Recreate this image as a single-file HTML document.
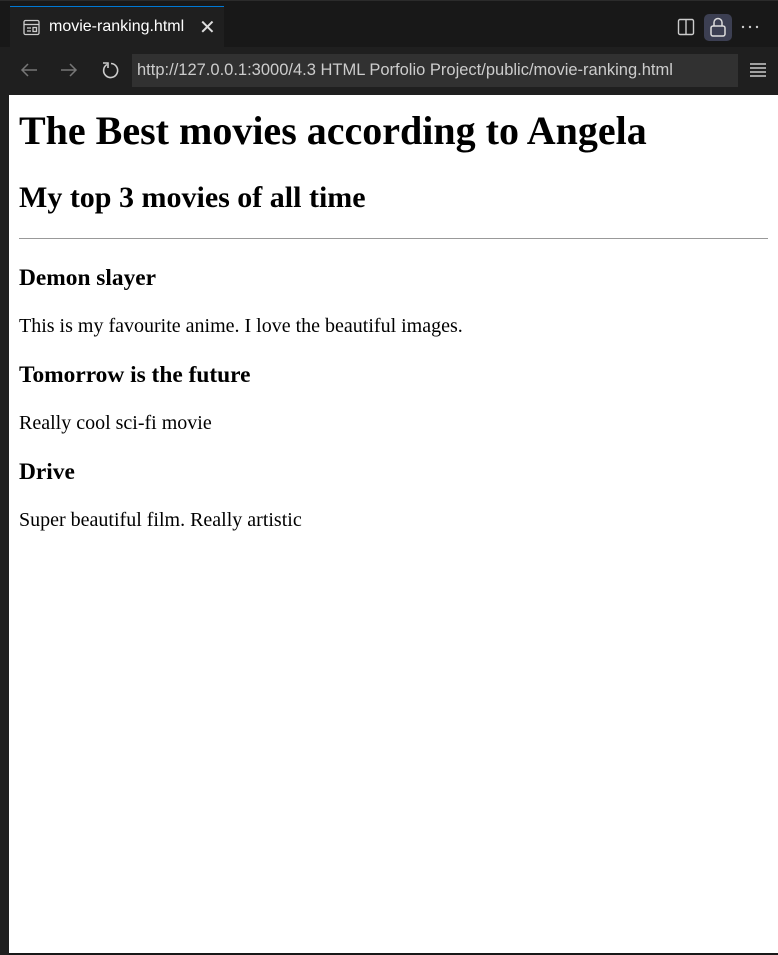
<!DOCTYPE html>
<html><head><style>
html,body{margin:0;padding:0;width:778px;height:955px;overflow:hidden;background:#181818;font-family:"Liberation Sans",sans-serif}
.top{position:absolute;left:0;top:0;width:778px;height:47px;background:#181818;border-top:1px solid #2b2b2b;box-sizing:border-box}
.tab{position:absolute;left:10px;top:5px;width:214px;height:42px;background:#1f1f1f;border-top:1px solid #0078d4;box-sizing:border-box;color:#fff;font-size:16px}
.tab .t{position:absolute;left:39px;top:11px}
.tab .x{position:absolute;left:189px;top:8px;font-size:20px;color:#ddd}
.bar{position:absolute;left:9px;top:47px;width:769px;height:48px;background:#1f1f1f}
.url{position:absolute;left:123px;top:7px;width:606px;height:33px;background:#313131;color:#ccc;font-size:16.5px;line-height:33px;padding-left:5px;box-sizing:border-box;white-space:nowrap}
.left{position:absolute;left:0;top:47px;width:9px;height:908px;background:#1f1f1f}
.page{position:absolute;left:9px;top:95px;width:769px;height:858px;background:#fff;overflow:hidden}
.c{zoom:1.25;font-family:"Liberation Serif",serif;margin:8px;color:#000}
.c h1{font-size:32px;margin:9.6px 0 21.44px}
.c h2{font-size:24px;margin:19.9px 0 18.3px}
.c h3{font-size:18.72px;margin:18.72px 0}
.c h3.f{margin-top:21.1px}
.c p{font-size:16px;margin:16px 0}
.c hr{border:0;border-top:1px solid #999;margin:3.4px 0 0}
</style></head><body>
<div class="top">
<div class="tab">
<svg style="position:absolute;left:13px;top:12px" width="17" height="17" viewBox="0 0 17 17" fill="none" stroke="#ccc" stroke-width="1.3"><rect x="1" y="1.5" width="15" height="14" rx="1.5"/><line x1="1" y1="5.5" x2="16" y2="5.5"/><line x1="4" y1="9" x2="8" y2="9"/><line x1="4" y1="12" x2="8" y2="12"/><rect x="10" y="8.5" width="3.5" height="4"/></svg>
<span class="t">movie-ranking.html</span><span class="x">✕</span></div>
<svg style="position:absolute;left:677px;top:17px" width="18" height="18" viewBox="0 0 18 18" fill="none" stroke="#ccc" stroke-width="1.4"><rect x="1.5" y="1.5" width="15" height="15" rx="1.5"/><line x1="9" y1="1.5" x2="9" y2="16.5"/></svg>
<div style="position:absolute;left:704px;top:13px;width:28px;height:27px;background:#3c3f52;border-radius:5px"></div>
<svg style="position:absolute;left:709px;top:15px" width="18" height="22" viewBox="0 0 18 22" fill="none" stroke="#ddd" stroke-width="1.5"><rect x="2" y="10" width="14" height="10" rx="2"/><path d="M5 10V6.5a4 4 0 0 1 8 0V10"/></svg>
<svg style="position:absolute;left:741px;top:24px" width="18" height="4" viewBox="0 0 18 4" fill="#ccc"><circle cx="2" cy="2" r="1.2"/><circle cx="9" cy="2" r="1.2"/><circle cx="16" cy="2" r="1.2"/></svg>
</div>
<div class="left"></div>
<div class="bar">
<svg style="position:absolute;left:10px;top:14px" width="20" height="18" viewBox="0 0 20 18" fill="none" stroke="#777" stroke-width="1.5"><path d="M18 9H3M9 3L3 9l6 6"/></svg>
<svg style="position:absolute;left:50px;top:14px" width="20" height="18" viewBox="0 0 20 18" fill="none" stroke="#777" stroke-width="1.5"><path d="M2 9h15M11 3l6 6-6 6"/></svg>
<svg style="position:absolute;left:91px;top:12px" width="20" height="22" viewBox="0 0 20 22" fill="none" stroke="#ccc" stroke-width="1.6"><path d="M7 5.5A7 7 0 1 0 11 4.5"/><path d="M3 4h5v5"/></svg>
<div class="url">http://127.0.0.1:3000/4.3 HTML Porfolio Project/public/movie-ranking.html</div>
<svg style="position:absolute;left:740px;top:15px" width="18" height="16" viewBox="0 0 18 16" stroke="#ccc" stroke-width="1.5"><line x1="1" y1="2" x2="17" y2="2"/><line x1="1" y1="6" x2="17" y2="6"/><line x1="1" y1="10" x2="17" y2="10"/><line x1="1" y1="14" x2="17" y2="14"/></svg>
</div>
<div class="page"><div class="c">
<h1>The Best movies according to Angela</h1>
<h2>My top 3 movies of all time</h2>
<hr>
<h3 class="f">Demon slayer</h3>
<p>This is my favourite anime. I love the beautiful images.</p>
<h3>Tomorrow is the future</h3>
<p>Really cool sci-fi movie</p>
<h3>Drive</h3>
<p>Super beautiful film. Really artistic</p>
</div></div>
</body></html>
